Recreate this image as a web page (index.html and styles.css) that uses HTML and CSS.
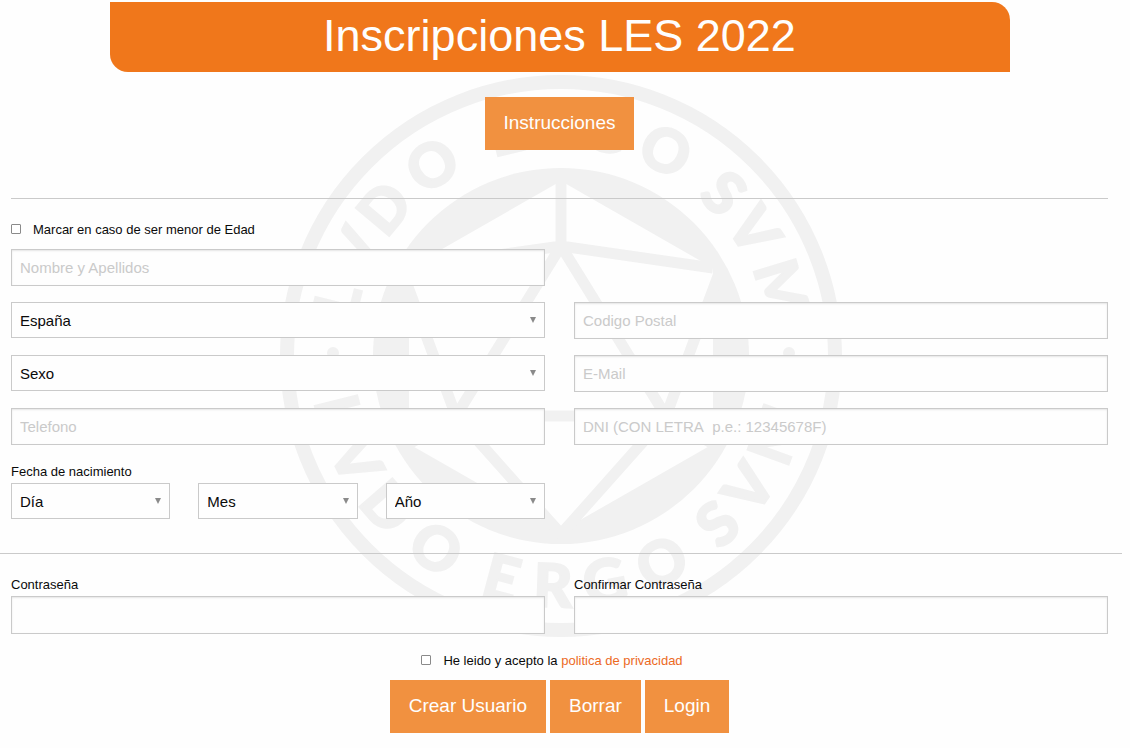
FILE: index.html
```html
<!DOCTYPE html>
<html lang="es">
<head>
<meta charset="utf-8">
<title>Inscripciones LES 2022</title>
<link rel="stylesheet" href="styles.css">
</head>
<body>
<div class="page">
  <svg class="seal" viewBox="0 0 562 562" aria-hidden="true">
    <g transform="translate(281 281)">
      <circle class="seal-ring" r="274"/>
      <circle r="188"/>
      <polygon class="seal-face" points="0,-175 152,-88 152,88 0,175 -152,88 -152,-88"/>
      <path class="seal-lines" d="M0-180V-110M-152-88L0-110L152-88M0-110L-105 60H105ZM-160-88L-105 60L-152 88M160-88L105 60L152 88M-105 60L0 178L105 60"/>
      <circle cx="-228" cy="-3" r="6"/>
      <circle cx="228" cy="-3" r="6"/>
      <g class="seal-text">
        <text y="-209" transform="rotate(-76)">L</text>
        <text y="-209" transform="rotate(-63)">V</text>
        <text y="-209" transform="rotate(-50)">D</text>
        <text y="-209" transform="rotate(-34)">O</text>
        <text y="-209" transform="rotate(-14)">E</text>
        <text y="-209" transform="rotate(-2)">R</text>
        <text y="-209" transform="rotate(11)">G</text>
        <text y="-209" transform="rotate(27)">O</text>
        <text y="-209" transform="rotate(45)">S</text>
        <text y="-209" transform="rotate(57)">V</text>
        <text y="-209" transform="rotate(73)">M</text>
        <text y="251" transform="rotate(76)">L</text>
        <text y="251" transform="rotate(63)">V</text>
        <text y="251" transform="rotate(49)">D</text>
        <text y="251" transform="rotate(33)">O</text>
        <text y="251" transform="rotate(15)">E</text>
        <text y="251" transform="rotate(2)">R</text>
        <text y="251" transform="rotate(-11)">G</text>
        <text y="251" transform="rotate(-26)">O</text>
        <text y="251" transform="rotate(-43)">S</text>
        <text y="251" transform="rotate(-55)">V</text>
        <text y="251" transform="rotate(-70)">M</text>
      </g>
    </g>
  </svg>

  <header class="banner"><h1 class="banner-title">Inscripciones LES 2022</h1></header>
  <div class="intro"><button type="button" class="button">Instrucciones</button></div>

  <form class="form">
    <hr class="rule">
    <div class="check">
      <input type="checkbox" id="menor" class="box"><label for="menor">Marcar en caso de ser menor de Edad</label>
    </div>
    <div class="grid">
      <input class="field first" type="text" placeholder="Nombre y Apellidos" aria-label="Nombre y Apellidos">
      <select class="field select" aria-label="País"><option>España</option></select>
      <input class="field" type="text" placeholder="Codigo Postal" aria-label="Codigo Postal">
      <select class="field select" aria-label="Sexo"><option>Sexo</option></select>
      <input class="field" type="email" placeholder="E-Mail" aria-label="E-Mail">
      <input class="field" type="tel" placeholder="Telefono" aria-label="Telefono">
      <input class="field" type="text" placeholder="DNI (CON LETRA&nbsp; p.e.: 12345678F)" aria-label="DNI">
      <div class="birth" role="group" aria-labelledby="nacimiento">
        <span class="label" id="nacimiento">Fecha de nacimiento</span>
        <div class="dates">
          <select class="field select" aria-label="Día"><option>Día</option></select>
          <select class="field select" aria-label="Mes"><option>Mes</option></select>
          <select class="field select" aria-label="Año"><option>Año</option></select>
        </div>
      </div>
    </div>
    <hr class="rule rule-wide">
    <div class="grid passwords">
      <div><label class="label" for="clave">Contraseña</label><input class="field tall" type="password" id="clave"></div>
      <div><label class="label" for="clave2">Confirmar Contraseña</label><input class="field tall" type="password" id="clave2"></div>
    </div>
    <div class="check privacy">
      <input type="checkbox" id="acepto" class="box"><label for="acepto">He leido y acepto la <a class="link" href="#privacidad">politica de privacidad</a></label>
    </div>
    <div class="actions">
      <button type="submit" class="button">Crear Usuario</button>
      <button type="reset" class="button">Borrar</button>
      <button type="button" class="button">Login</button>
    </div>
  </form>
</div>
</body>
</html>
```
FILE: styles.css
```css
* { box-sizing: border-box; }
body {
  margin: 0;
  background: #fefefe;
  color: #0a0a0a;
  font-family: "Liberation Sans", Arial, sans-serif;
  font-size: 13px;
  line-height: 20px;
}
.page {
  position: relative;
  margin-right: 8px;
  padding: 2px 14px 14px 11px;
}
/* Watermark behind the form */
.seal {
  position: absolute;
  z-index: -1;
  top: 75px;
  left: 50%;
  width: 562px;
  height: 562px;
  margin-left: -281px;
  fill: #f1f1f1;
}
.seal-ring { fill: none; stroke: #f1f1f1; stroke-width: 14; }
.seal-face { fill: #fefefe; }
.seal-lines { fill: none; stroke: #f1f1f1; stroke-width: 11; }
.seal-text {
  font: 900 60px Lato, sans-serif;
  text-anchor: middle;
  stroke: #f1f1f1;
  stroke-width: 2;
}
.banner {
  max-width: 900px;
  margin: 0 auto;
  padding: 9px 16px 11px;
  background: #f0771b;
  border-radius: 0 18px;
  color: #fefefe;
  text-align: center;
}
.banner-title { margin: 0; font-size: 45px; font-weight: 400; line-height: 50px; }
.intro { display: flex; justify-content: center; padding: 25px 0 48px; }
.button {
  height: 53px;
  padding: 0 19px 2px;
  border: 0;
  background: #f19140;
  color: #fefefe;
  font-family: inherit;
  font-size: 19px;
  cursor: pointer;
}
.rule { margin: 0; border: 0; border-top: 1px solid #cacaca; }
.rule-wide { margin: 34px -14px 0 -11px; }
.check { display: flex; align-items: center; gap: 12px; padding: 21px 0 9px; }
.box {
  appearance: none;
  width: 10px;
  height: 10px;
  margin: 0 0 2px;
  border: 1px solid #8a8a8a;
  border-radius: 1px;
  background: #fff;
}
.box:checked { background: #f0771b; }
.grid { display: grid; grid-template-columns: 1fr 1fr; gap: 16px 29px; align-items: start; }
.first { grid-column: 1; }
.first + .select { grid-column: 1; }
.field {
  display: block;
  width: 100%;
  height: 37px;
  padding: 0 8px;
  border: 1px solid #cacaca;
  border-radius: 0;
  background: #fefefe;
  box-shadow: inset 0 1px 2px rgba(10, 10, 10, 0.1);
  color: #0a0a0a;
  font-family: inherit;
  font-size: 15px;
}
.field::placeholder { color: #cacaca; opacity: 1; }
.select {
  height: 36px;
  appearance: none;
  box-shadow: none;
  background: #fefefe url("data:image/svg+xml,%3Csvg xmlns='http://www.w3.org/2000/svg' width='6' height='6'%3E%3Cpath d='M0 0h6L3 6z' fill='%238a8a8a'/%3E%3C/svg%3E") no-repeat right 8px center;
}
.tall { height: 38px; }
.label { display: block; line-height: 22px; }
.dates { display: grid; grid-template-columns: repeat(3, 1fr); gap: 28px; }
.passwords { padding-top: 20px; }
.privacy { justify-content: center; padding: 17px 0 9px; margin-right: 15px; }
.link { color: #ec6a1e; text-decoration: none; }
.actions { display: flex; justify-content: center; gap: 4px; }
```
